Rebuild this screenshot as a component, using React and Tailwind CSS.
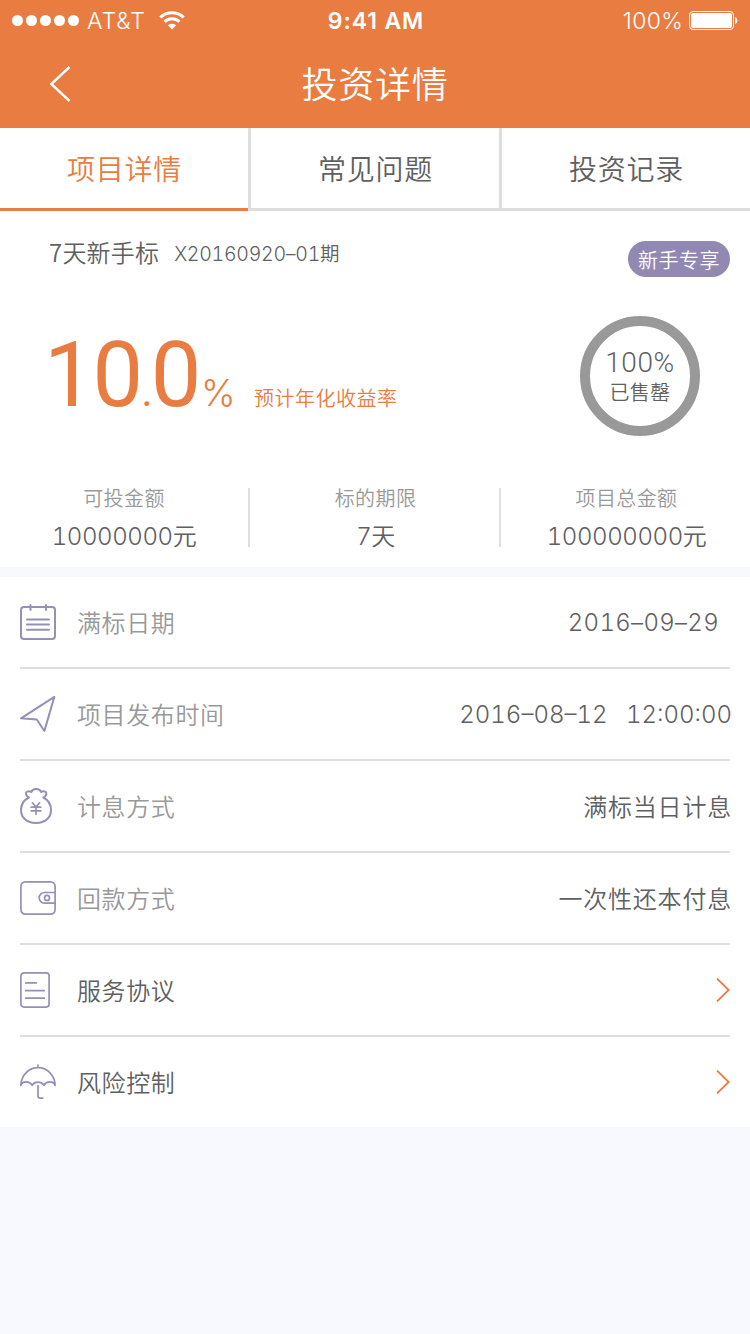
const CJK = "font-['Noto_Sans_CJK_SC',sans-serif] font-[350]";
const NUM = "font-['Inter','Noto_Sans_CJK_SC',sans-serif] font-[350] tabular-nums";

function IconBox({ children }) {
  return (
    <svg
      width="36"
      height="36"
      viewBox="0 0 36 36"
      fill="none"
      stroke="#9490b8"
      strokeWidth="2"
      strokeLinecap="round"
      strokeLinejoin="round"
      className="shrink-0"
    >
      {children}
    </svg>
  );
}

function CalendarIcon() {
  return (
    <IconBox>
      <rect x="1" y="3" width="34" height="32" rx="3" />
      <path d="M10.5 1v5M26 1v5M7 15.5h22M7 20.5h22M7 25.7h22" />
    </IconBox>
  );
}

function PlaneIcon() {
  return (
    <IconBox>
      <path d="M34.3 0.9 1 22.3l15.8 1.2L24.4 35z" />
    </IconBox>
  );
}

function MoneyBagIcon() {
  return (
    <IconBox>
      <path d="M9 9.500C7 8.500 5.200 6.300 6.300 4.400 7.500 2.700 10 2.900 11.400 4 12.100 1.800 14 1 16.200 1s4.100.8 4.800 3c1.400-1.100 3.900-1.300 5.100.4 1.100 1.900-.7 4.100-2.700 5.100C28 12 31 16.800 31 22.100 31 29.500 25.500 35 16 35S1 29.500 1 22.100C1 16.800 4 12 9 9.500z" />
      <path d="m12.400 14.800 3.600 4.200 3.600-4.200M11.200 19.200h9.600M11.200 22.800h9.600M16 19.200v7" strokeWidth="1.700" />
    </IconBox>
  );
}

function WalletIcon() {
  return (
    <IconBox>
      <rect x="0.900" y="1.900" width="34.200" height="32.200" rx="4.500" strokeWidth="1.700" />
      <path d="M35 12.500H24.500a5.300 5.300 0 0 0 0 10.700H35" strokeWidth="1.700" />
      <circle cx="27" cy="17.900" r="2.500" strokeWidth="1.700" />
    </IconBox>
  );
}

function DocumentIcon() {
  return (
    <IconBox>
      <rect x="0.900" y="0.900" width="28.200" height="34.200" rx="3" strokeWidth="1.700" />
      <path d="M5.700 10.900h10.500M5.700 18.600h18.600M5.700 26.200h18.600" strokeWidth="1.700" />
    </IconBox>
  );
}

function UmbrellaIcon() {
  return (
    <IconBox>
      <path
        d="M18 1.200v2.500M.9 21.500C1 11.500 8.500 3.700 18 3.700s17 7.800 17.100 17.800c-1.600-4.700-8.300-4.700-11.300-.3-2.400-4-9.200-4-11.600 0-3-4.400-9.700-4.400-11.300.3zM18 21.500v10.500c0 1.800.9 2.200 2.300 2.200h2.400"
        strokeWidth="1.700"
      />
    </IconBox>
  );
}

function Arrow() {
  return (
    <svg width="14" height="24" viewBox="0 0 14 24" fill="none" stroke="#e97c40" strokeWidth="1.800">
      <path d="M1 0.600 12.700 12 1 23.400" />
    </svg>
  );
}

function StatusBar() {
  return (
    <div className="grid h-10 grid-cols-3 items-center font-['Inter',sans-serif] text-white">
      <div className="flex items-center pl-3 pt-px">
        <div className="flex gap-[3px]">
          {[0, 1, 2, 3, 4].map((i) => (
            <span key={i} className="size-[11px] rounded-full bg-white" />
          ))}
        </div>
        <span className="ml-2 w-[58px] pt-0.5 text-[23px] leading-none font-light tracking-[0.9px]">AT&amp;T</span>
        <svg width="26" height="19" viewBox="0 0 26 19" fill="none" stroke="white" strokeWidth="3" className="ml-3.5">
          <path d="M1.300 6.300a17 17 0 0 1 23.400 0M5.500 10.700a11 11 0 0 1 15 0" />
          <path d="M8.800 14.300a6.200 6.200 0 0 1 8.400 0L13 18.500z" fill="white" stroke="none" />
        </svg>
      </div>
      <div className="pt-[3px] pl-0.5 text-center text-[23px] leading-none font-semibold tracking-[0.9px]">9:41 AM</div>
      <div className="flex items-center justify-end pr-3 pt-px">
        <span className="pt-0.5 text-[23px] leading-none font-light tracking-[0.3px]">100%</span>
        <svg width="49" height="19" viewBox="0 0 49 19" className="ml-1.5">
          <rect x="0.500" y="0.500" width="44" height="18" rx="3.500" fill="none" stroke="white" />
          <rect x="2" y="2" width="41" height="15" rx="2" fill="white" />
          <path d="M46 6c3.300 1 3.300 6 0 7z" fill="white" />
        </svg>
      </div>
    </div>
  );
}

const tabs = ["项目详情", "常见问题", "投资记录"];

const stats = [
  { label: "可投金额", value: "10000000元", style: "w-[250px] border-r-2" },
  { label: "标的期限", value: "7天", style: "w-[251px] border-r-2 pl-0.5" },
  { label: "项目总金额", value: "100000000元", style: "w-[249px] pl-0.5" },
];

const rows = [
  { icon: CalendarIcon, label: "满标日期", value: "2016–09–29", style: `pr-[13px] pt-0.5 tracking-[0.3px] ${NUM}` },
  { icon: PlaneIcon, label: "项目发布时间", value: "2016–08–12\u2002 12:00:00", style: `pt-0.5 ${NUM}` },
  { icon: MoneyBagIcon, label: "计息方式", value: "满标当日计息", style: "tracking-[0.8px]" },
  { icon: WalletIcon, label: "回款方式", value: "一次性还本付息", style: "tracking-[0.8px]" },
  { icon: DocumentIcon, label: "服务协议", link: true },
  { icon: UmbrellaIcon, label: "风险控制", link: true },
];

export default function App() {
  return (
    <div className={`flex h-[1334px] w-[750px] flex-col overflow-hidden bg-[#f8f9fe] text-[#606060] ${CJK}`}>
      <header className="h-32 shrink-0 bg-[#e97c40] text-white">
        <StatusBar />
        <div className="grid h-[88px] grid-cols-[80px_1fr_80px] items-center">
          <svg width="22" height="36" viewBox="0 0 22 36" fill="none" stroke="white" strokeWidth="2.400" className="ml-[49px]">
            <path d="M20.500 1 2.300 18l18.200 17" />
          </svg>
          <h1 className="pb-1 text-center text-[36px] leading-none tracking-[0.7px]">投资详情</h1>
        </div>
      </header>

      <nav className="flex h-[83px] shrink-0 gap-[3px] bg-[#dedede]">
        {tabs.map((t, i) => (
          <div
            key={t}
            className={`flex flex-1 items-center justify-center border-b-3 bg-white pl-px text-[28px] leading-none tracking-[0.7px] ${
              i === 0 ? "border-[#e97c40] text-[#e97c40]" : "border-[#dedede]"
            }`}
          >
            {t}
          </div>
        ))}
      </nav>

      <section className="h-[356px] shrink-0 bg-white">
        <div className="flex h-[84px] justify-between pr-5 pl-[49px]">
          <div className="flex h-[82px] items-center gap-[15px] leading-none">
            <span className="text-[24px] tracking-[0.2px]">7天新手标</span>
            <span className={`pt-1.5 text-[19.500px] tracking-[-0.25px] ${NUM}`}>X20160920–01期</span>
          </div>
          <span className="mt-[30px] flex h-9 w-[102px] items-center justify-center rounded-full bg-[#9189b2] pt-0.5 text-[20px] leading-none tracking-[0.5px] text-white">
            新手专享
          </span>
        </div>
        <div className="flex h-[162px] items-center justify-between pr-[50px] pl-[44px] text-[#e97c40]">
          <div className="flex items-baseline leading-none">
            <span className="flex w-[157px] items-baseline font-['Roboto',sans-serif] text-[90px] font-normal tracking-[-2px]">
              10<span className="text-[44px]">.</span>0
            </span>
            <span className="w-[33px] font-['Inter',sans-serif] text-[37px] font-light">%</span>
            <span className="ml-5 text-[20px] tracking-[0.5px]">预计年化收益率</span>
          </div>
          <div className="flex size-[120px] flex-col items-center justify-center gap-[7px] rounded-full border-10 border-[#999999] text-[#606060]">
            <span className="font-['Roboto',sans-serif] text-[28px] leading-[24px] font-[350] tracking-[0.6px]">100%</span>
            <span className="text-[20px] leading-[20px] tracking-[0.4px]">已售罄</span>
          </div>
        </div>
        <div className="flex pt-[31px]">
          {stats.map((s) => (
            <div key={s.label} className={`flex h-[59px] flex-col items-center border-[#dedede] leading-none ${s.style}`}>
              <span className="text-[20px] tracking-[0.4px] text-[#999999]">{s.label}</span>
              <span className={`mt-[17px] text-[24px] tracking-[-0.4px] ${NUM}`}>{s.value}</span>
            </div>
          ))}
        </div>
      </section>

      <section className="mt-2.5 shrink-0 bg-white px-5">
        {rows.map((r, i) => (
          <div
            key={r.label}
            className={`flex items-center ${i < 5 ? "h-[92px] border-b-2 border-[#dedede]" : "h-[90px]"}`}
          >
            <r.icon />
            <span className={`ml-5 flex-1 pl-px text-[24px] leading-none tracking-[0.6px] ${r.link ? "" : "text-[#999999]"}`}>
              {r.label}
            </span>
            {r.link ? <Arrow /> : <span className={`-mr-0.5 text-[24px] leading-none ${r.style}`}>{r.value}</span>}
          </div>
        ))}
      </section>
    </div>
  );
}
